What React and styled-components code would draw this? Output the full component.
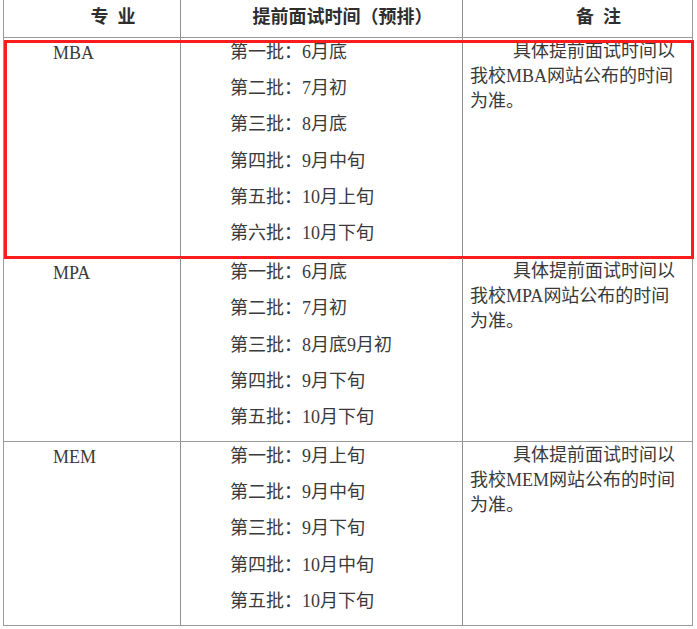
import React from "react";
import styled, { createGlobalStyle } from "styled-components";

const NUMS = ["一", "二", "三", "四", "五", "六"];

const programs = [
  {
    name: "MBA",
    batches: ["6月底", "7月初", "8月底", "9月中旬", "10月上旬", "10月下旬"],
    highlight: true,
  },
  {
    name: "MPA",
    batches: ["6月底", "7月初", "8月底9月初", "9月下旬", "10月下旬"],
  },
  {
    name: "MEM",
    batches: ["9月上旬", "9月中旬", "9月下旬", "10月中旬", "10月下旬"],
  },
];

const App = () => {
  return (
    <>
      <GlobalStyle />
      <Table>
        <Row $header>
          <HeadCell>专&ensp;业</HeadCell>
          <HeadCell>提前面试时间（预排）</HeadCell>
          <HeadCell $last>备&ensp;注</HeadCell>
        </Row>
        {programs.map((p) => (
          <Row key={p.name}>
            <MajorCell>{p.name}</MajorCell>
            <BatchCell>
              {p.batches.map((b, i) => (
                <Batch key={i}>
                  第{NUMS[i]}批：{b}
                </Batch>
              ))}
            </BatchCell>
            <NoteCell>具体提前面试时间以我校{p.name}网站公布的时间为准。</NoteCell>
            {p.highlight && <Highlight />}
          </Row>
        ))}
      </Table>
    </>
  );
};

export default App;

// Styled Components
const GlobalStyle = createGlobalStyle`
  body {
    margin: 0;
    background: #ffffff;
    font-family: "Liberation Serif", "Noto Sans CJK SC", serif;
    color: #3a3a3a;
  }
`;

const Table = styled.div`
  margin-left: 3px;
  width: 690px;
  box-sizing: border-box;
  border-left: 1px solid #9a9a9a;
  border-right: 1px solid #9a9a9a;
`;

const Row = styled.div`
  position: relative;
  display: grid;
  grid-template-columns: 177px 282px 229px;
  border-bottom: 1px solid #9a9a9a;
  height: ${({ $header }) => ($header ? "37px" : "auto")};
`;

const Cell = styled.div`
  box-sizing: border-box;
  border-right: ${({ $last }) => ($last ? "none" : "1px solid #8f8f8f")};
  font-size: 18px;
`;

const HeadCell = styled(Cell)`
  padding-left: 42px;
  text-align: center;
  line-height: 31px;
  font-family: "Noto Sans CJK SC", sans-serif;
  font-weight: 700;
  color: #2e2e2e;
`;

const MajorCell = styled(Cell)`
  padding: 3px 0 0 49px;
  line-height: 24px;
`;

const BatchCell = styled(Cell)`
  padding: 2px 0 0 49px;
`;

const Batch = styled.div`
  line-height: 24px;
  margin-bottom: 12.2px;
`;

const NoteCell = styled(Cell)`
  border-right: none;
  padding: 1px 10px 0 7px;
  line-height: 25px;
  text-indent: 43px;
`;

const Highlight = styled.div`
  position: absolute;
  top: 2px;
  bottom: -2px;
  left: 0;
  right: -2px;
  border: 3px solid #fb1d1d;
  pointer-events: none;
`;
